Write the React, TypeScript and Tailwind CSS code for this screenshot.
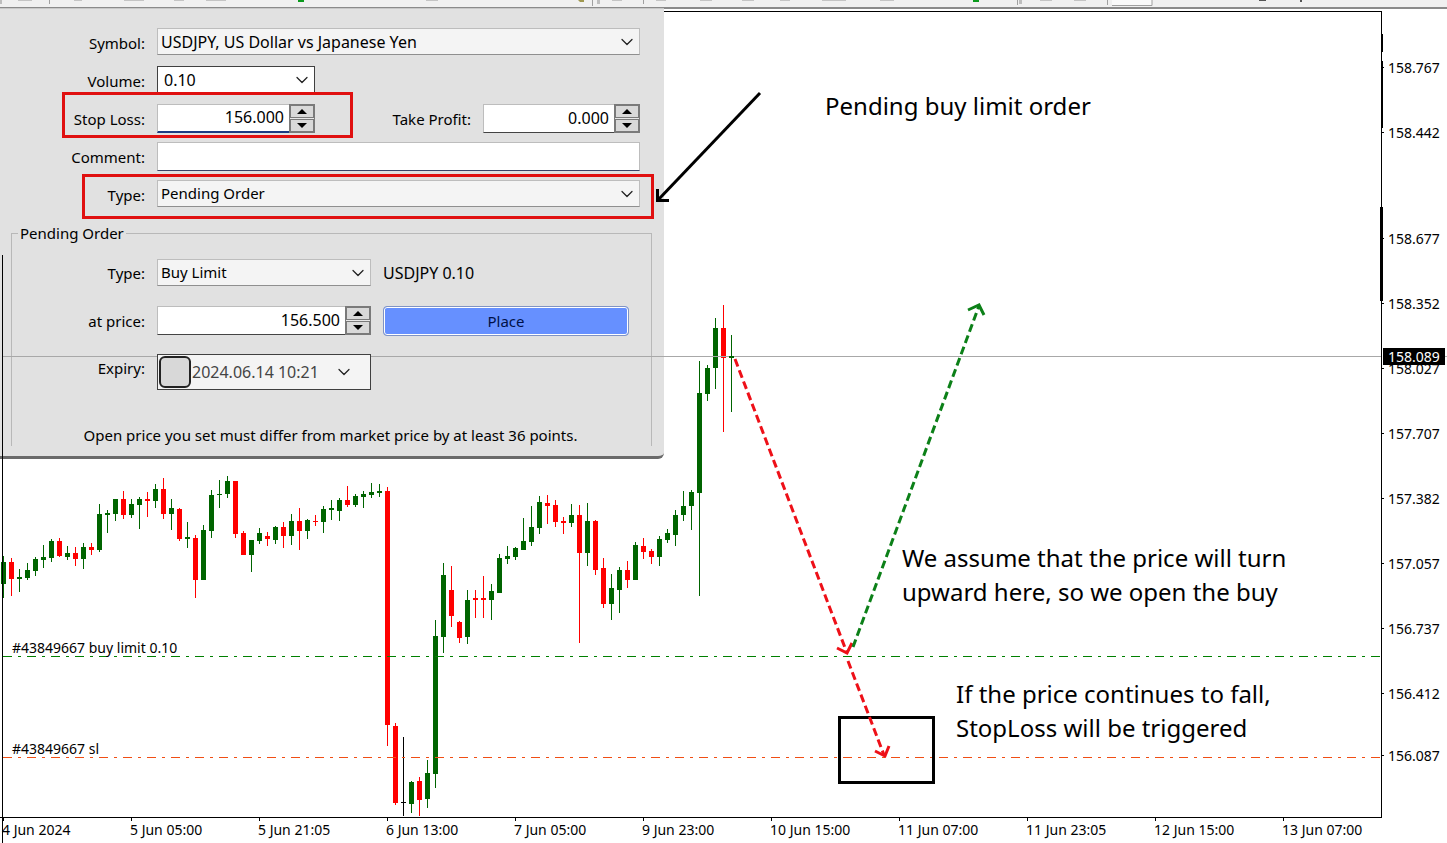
import { useState } from "react";
import { ChevronDown } from "lucide-react";

type Candle = [high: number, top: number, bottom: number, low: number, tone: "g" | "r" | "k"];

// one candle every 8px, starting at x = 3
const candles: Candle[] = [
  [556, 562, 584, 598, "g"], [558, 562, 579, 596, "r"], [569, 577, 579, 592, "g"], [563, 570, 578, 580, "g"],
  [557, 559, 571, 576, "g"], [545, 557, 560, 568, "g"], [539, 541, 558, 562, "g"], [538, 541, 556, 557, "r"],
  [546, 553, 557, 560, "g"], [547, 553, 559, 566, "r"], [543, 547, 559, 569, "g"], [543, 547, 550, 555, "r"],
  [504, 514, 550, 552, "g"], [510, 513, 515, 533, "g"], [499, 499, 514, 521, "g"], [491, 499, 515, 519, "r"],
  [499, 504, 515, 518, "g"], [497, 499, 505, 529, "g"], [492, 499, 501, 517, "r"], [484, 489, 501, 508, "g"],
  [478, 489, 514, 519, "r"], [499, 508, 514, 530, "g"], [508, 509, 539, 541, "r"], [522, 537, 539, 548, "g"],
  [535, 538, 580, 598, "r"], [525, 530, 580, 580, "g"], [490, 495, 531, 538, "g"], [480, 494, 495, 508, "g"],
  [476, 481, 494, 498, "g"], [481, 481, 534, 538, "r"], [531, 533, 555, 555, "r"], [540, 540, 555, 572, "g"],
  [528, 533, 541, 544, "g"], [532, 536, 539, 546, "r"], [526, 527, 540, 544, "g"], [522, 527, 536, 548, "r"],
  [514, 521, 536, 545, "g"], [508, 521, 531, 550, "r"], [519, 520, 531, 539, "g"], [515, 521, 522, 526, "r"],
  [506, 509, 522, 533, "g"], [500, 508, 510, 520, "g"], [498, 500, 511, 521, "g"], [486, 500, 505, 507, "r"],
  [494, 496, 505, 507, "g"], [491, 494, 497, 508, "g"], [483, 492, 495, 498, "g"], [484, 491, 493, 497, "g"],
  [487, 491, 725, 746, "r"], [723, 726, 803, 805, "r"], [737, 802, 803, 816, "k"], [781, 782, 804, 813, "g"],
  [777, 781, 800, 816, "r"], [760, 773, 799, 808, "g"], [620, 636, 774, 788, "g"], [563, 575, 637, 653, "g"],
  [566, 590, 616, 627, "r"], [621, 622, 638, 643, "r"], [590, 600, 637, 644, "g"], [590, 598, 600, 618, "r"],
  [576, 598, 600, 618, "r"], [584, 591, 600, 620, "g"], [554, 558, 593, 593, "g"], [546, 556, 559, 564, "g"],
  [547, 548, 557, 560, "g"], [518, 541, 550, 550, "g"], [506, 527, 542, 546, "g"], [496, 502, 528, 534, "g"],
  [495, 503, 506, 524, "r"], [500, 505, 522, 527, "r"], [517, 521, 523, 534, "r"], [504, 515, 523, 527, "g"],
  [505, 515, 553, 643, "r"], [503, 521, 553, 566, "g"], [520, 521, 570, 575, "r"], [558, 568, 604, 608, "r"],
  [574, 588, 604, 620, "g"], [567, 570, 590, 613, "g"], [561, 570, 580, 588, "r"], [542, 545, 580, 580, "g"],
  [538, 546, 552, 559, "r"], [549, 551, 557, 564, "r"], [536, 539, 557, 566, "g"], [529, 533, 540, 543, "g"],
  [510, 515, 535, 546, "g"], [491, 506, 515, 521, "g"], [490, 492, 506, 530, "g"], [361, 393, 493, 596, "g"],
  [365, 368, 394, 401, "g"], [318, 328, 368, 389, "g"], [305, 328, 358, 432, "r"], [335, 356, 358, 412, "g"],
];

const tones = { g: "#006400", r: "#ff0000", k: "#000000" };

const prices = [
  { y: 68, label: "158.767" },
  { y: 133, label: "158.442" },
  { y: 239, label: "158.677" },
  { y: 304, label: "158.352" },
  { y: 369, label: "158.027" },
  { y: 434, label: "157.707" },
  { y: 499, label: "157.382" },
  { y: 564, label: "157.057" },
  { y: 629, label: "156.737" },
  { y: 694, label: "156.412" },
  { y: 756, label: "156.087" },
];

const times = [
  "4 Jun 2024", "5 Jun 05:00", "5 Jun 21:05", "6 Jun 13:00", "7 Jun 05:00", "9 Jun 23:00",
  "10 Jun 15:00", "11 Jun 07:00", "11 Jun 23:05", "12 Jun 15:00", "13 Jun 07:00",
];

const labelClass = "shrink-0 text-right leading-[30px]";

function Toolbar() {
  return (
    <div className="h-[9px] border-b-2 border-[#8a8a8a] bg-[#f0f0f0]">
      <svg className="block h-[7px] w-full" aria-hidden="true">
        <path d="M0 1h2M0 3h2M597 1h3M597 3h3M1019 1h3M1019 3h3" stroke="#8c8c8c" />
        <path d="M49.5 0v4M592.5 0v6M643.5 0v4M1017.5 0v5M1107.5 0v5" stroke="#a0a0a0" />
        <path d="M18 0h14M74 0h8M124 0h20M174 0h10M206 0h20M426 0h12M612 0h10M656 0h10M700 0h12M742 0h12M780 0h10M822 0h24M880 0h14M1040 0h12M1074 0h12" stroke="#c4c4c4" strokeWidth="2" />
        <path d="M1112 0h40v5h-40z" fill="#fafafa" />
        <path d="M1112 5.5h40V0" fill="none" stroke="#a0a0a0" />
        <path d="M298 0h6v2h-6zM973 0h6v2h-6z" fill="#0a9a1c" />
        <path d="M578 0h6v2h-4z" fill="#a09850" />
        <path d="M1259 0h7v1h-7zM1300 0h2v2h-2z" fill="#555" />
      </svg>
    </div>
  );
}

function Picker({ id, value, className, tall }: { id: string; value: string; className: string; tall?: boolean }) {
  return (
    <div className={`relative ${className}`}>
      <select
        id={id}
        defaultValue={value}
        className={
          tall
            ? "block h-7 w-full appearance-none border border-[#404040] bg-white pl-1.5 text-black outline-none"
            : "block h-[27px] w-full appearance-none border border-[#bdbdbd] border-b-[#8f8f8f] bg-[#f4f4f4] pl-[3px] text-black outline-none"
        }
      >
        <option>{value}</option>
      </select>
      <ChevronDown className="pointer-events-none absolute top-1 right-[3px] h-5 w-5 text-[#222]" strokeWidth={1.5} />
    </div>
  );
}

function Spinner({ id, initial, step, className, focused }: { id: string; initial: number; step: number; className: string; focused?: boolean }) {
  const [value, setValue] = useState(initial);
  const button = "flex h-[13px] w-6 items-center justify-center border border-[#7a7a7a] bg-[#d9d9d9]";
  return (
    <div className={`flex h-[29px] text-base ${className}`}>
      <input
        id={id}
        value={value.toFixed(3)}
        onChange={(e) => setValue(Number(e.target.value) || 0)}
        className={`min-w-0 flex-1 border-t border-l border-[#bdbdbd] bg-white pr-[5px] pb-0.5 text-right text-black outline-none ${
          focused ? "border-b-2 border-b-[#1b3a82]" : "border-b border-b-[#444]"
        }`}
      />
      <div className="flex flex-col justify-between border border-[#7a7a7a] bg-[#e8e8e8]">
        <button type="button" aria-label="Increase" className={button} onClick={() => setValue(value + step)}>
          <svg width="10" height="5"><path d="M5 0L10 5H0z" /></svg>
        </button>
        <button type="button" aria-label="Decrease" className={button} onClick={() => setValue(value - step)}>
          <svg width="10" height="5"><path d="M0 0H10L5 5z" /></svg>
        </button>
      </div>
    </div>
  );
}

function OrderDialog() {
  return (
    <form
      onSubmit={(e) => e.preventDefault()}
      className="absolute top-2 left-0 w-[664px] rounded-br-md border-t border-b-3 border-t-[#c8c8c8] border-b-[#6a6a6a] bg-[#e1e1e1] pt-[19px] text-[15px] text-black"
    >
      <div className="flex h-[38px] gap-3 pr-6">
        <label htmlFor="symbol" className={`w-[145px] ${labelClass}`}>Symbol:</label>
        <Picker id="symbol" value="USDJPY, US Dollar vs Japanese Yen" className="flex-1 text-base" />
      </div>
      <div className="flex h-[38px] gap-3 pr-6">
        <label htmlFor="volume" className={`w-[145px] ${labelClass}`}>Volume:</label>
        <Picker id="volume" value="0.10" className="w-[158px] text-base" tall />
      </div>
      <div className="flex h-[38px] gap-3 pr-6">
        <label htmlFor="sl" className={`w-[145px] ${labelClass}`}>Stop Loss:</label>
        <Spinner id="sl" initial={156} step={0.001} className="w-[158px]" focused />
        <label htmlFor="tp" className={`flex-1 ${labelClass}`}>Take Profit:</label>
        <Spinner id="tp" initial={0} step={0.001} className="w-[157px]" />
      </div>
      <div className="flex h-[38px] gap-3 pr-6">
        <label htmlFor="comment" className={`w-[145px] ${labelClass}`}>Comment:</label>
        <input id="comment" className="h-[29px] flex-1 border border-[#bdbdbd] border-b-[#3a4468] bg-white px-1 outline-none" />
      </div>
      <div className="flex h-[38px] gap-3 pr-6">
        <label htmlFor="type" className={`w-[145px] ${labelClass}`}>Type:</label>
        <Picker id="type" value="Pending Order" className="flex-1" />
      </div>

      <fieldset className="mt-1.5 mr-3 mb-2.5 ml-[11px] border border-b-0 border-[#b8b8b8] pt-[17px]">
        <legend className="ml-1.5 px-0.5 leading-[18px]">Pending Order</legend>
        <div className="flex h-[47px] gap-3">
          <label htmlFor="pending-type" className="w-[133px] shrink-0 text-right leading-7">Type:</label>
          <Picker id="pending-type" value="Buy Limit" className="w-[214px]" />
          <span className="text-base leading-7">USDJPY 0.10</span>
        </div>
        <div className="flex h-12 gap-3">
          <label htmlFor="price" className={`w-[133px] ${labelClass}`}>at price:</label>
          <Spinner id="price" initial={156.5} step={0.001} className="w-[214px]" />
          <button
            type="submit"
            className="h-[30px] w-[246px] rounded-sm border border-[#7f93c4] bg-[#6690ff] text-[#001048] inset-ring-1 inset-ring-white"
          >
            Place
          </button>
        </div>
        <div className="flex h-[70px] gap-3">
          <label htmlFor="expiry" className="w-[133px] shrink-0 text-right leading-7">Expiry:</label>
          <div className="flex h-9 w-[214px] items-center border border-[#404040] bg-[#f4f4f4] pl-px">
            <input
              type="checkbox"
              aria-label="Use expiry"
              className="h-8 w-8 shrink-0 appearance-none rounded-md border-2 border-[#222] bg-[#d8d8d8]"
            />
            <input
              id="expiry"
              defaultValue="2024.06.14 10:21"
              className="ml-px w-[130px] min-w-0 bg-transparent text-base text-[#444] outline-none"
            />
            <ChevronDown className="ml-3 h-5 w-5 text-[#222]" strokeWidth={1.5} />
          </div>
        </div>
        <p className="mr-[2px] text-center leading-[22px]">
          Open price you set must differ from market price by at least 36 points.
        </p>
      </fieldset>
    </form>
  );
}

function Plot() {
  return (
    <div className="min-w-0 flex-1 border-t border-r border-b border-black">
      <svg className="block h-[805px] w-full" role="img" aria-label="USDJPY candlestick chart">
        <g transform="translate(0 -12)" shapeRendering="crispEdges">
          {candles.map(([high, top, bottom, low, tone], i) => (
            <g key={i} fill={tones[tone]}>
              <rect x={3 + i * 8} y={high} width="1" height={low - high} />
              <rect x={1 + i * 8} y={top} width="5" height={bottom - top} />
            </g>
          ))}
          <line x1="3" x2="100%" y1="656.5" y2="656.5" stroke="#008000" strokeDasharray="9 6 3 6" />
          <line x1="3" x2="100%" y1="757.5" y2="757.5" stroke="#f04e14" strokeDasharray="9 6 3 6" />
        </g>
        <g transform="translate(0 -12)" fontSize="14">
          <text x="12" y="653">#43849667 buy limit 0.10</text>
          <text x="12" y="754">#43849667 sl</text>
        </g>
      </svg>
    </div>
  );
}

function PriceAxis() {
  return (
    <svg className="block h-[807px] w-[65px] shrink-0 overflow-visible" fontSize="14">
      <g transform="translate(0 -11)">
        <path d="M0 34v18M0 61v67" stroke="#000" strokeWidth="2" />
        <path d="M-.5 207v94" stroke="#000" strokeWidth="3" />
        {prices.map((p) => (
          <g key={p.label}>
            <rect y={p.y - 1} width="2" height="1" />
            <text x="6" y={p.y + 5}>{p.label}</text>
          </g>
        ))}
        <rect x="1" y="348" width="62" height="17" />
        <text x="6" y="362" fill="#fff">158.089</text>
        <rect x="63" y="356" width="2" height="1" fill="#b0b0b0" />
      </g>
    </svg>
  );
}

function TimeAxis() {
  return (
    <div className="flex h-[25px] overflow-hidden pl-0.5 text-sm whitespace-nowrap">
      {times.map((t) => (
        <div key={t} className="w-32 shrink-0">
          <div className="ml-px h-[3px] w-px bg-black" />
          <div className="leading-[18px]">{t}</div>
        </div>
      ))}
    </div>
  );
}

// arrows, frames and remarks drawn over the chart and the dialog
function Markup() {
  return (
    <svg className="pointer-events-none absolute inset-0 h-full w-full" fill="none">
      <path d="M2.5 255V843" stroke="#000" />
      <path d="M3 356.5H157M371 356.5H1381" stroke="#a8a8a8" />
      <path d="M729 357H734" stroke="#006400" strokeWidth="2" />
      <g stroke="#e01010" strokeWidth="3">
        <rect x="63.5" y="93.5" width="288" height="43" />
        <rect x="83.5" y="175.5" width="569" height="42" />
      </g>
      <rect x="839.5" y="717.5" width="94" height="65" stroke="#000" strokeWidth="3" />
      <g stroke="#000" strokeWidth="3">
        <path d="M760 93L658 200" />
        <path d="M657.500 189V200.500H669" />
      </g>
      <g stroke="#ee1018" strokeWidth="3">
        <path d="M735 359L847 653M848 661L884 755" strokeDasharray="8 4" />
        <path d="M837 648L847 653L852 643M875 751L885 756L889 746" />
      </g>
      <g stroke="#0c8018" strokeWidth="3">
        <path d="M853 647L979 306" strokeDasharray="8 4" />
        <path d="M968 310L979 305L984 315" />
      </g>
      <g fill="#000" fontSize="24">
        <text x="825" y="115">Pending buy limit order</text>
        <text x="902" y="567">We assume that the price will turn</text>
        <text x="902" y="601">upward here, so we open the buy</text>
        <text x="956" y="703">If the price continues to fall,</text>
        <text x="956" y="737">StopLoss will be triggered</text>
      </g>
    </svg>
  );
}

export default function App() {
  return (
    <div className="relative min-h-screen overflow-hidden bg-white font-['Noto_Sans',sans-serif] text-black">
      <Toolbar />
      <main className="pt-0.5">
        <div className="flex">
          <Plot />
          <PriceAxis />
        </div>
        <TimeAxis />
      </main>
      <OrderDialog />
      <Markup />
    </div>
  );
}
